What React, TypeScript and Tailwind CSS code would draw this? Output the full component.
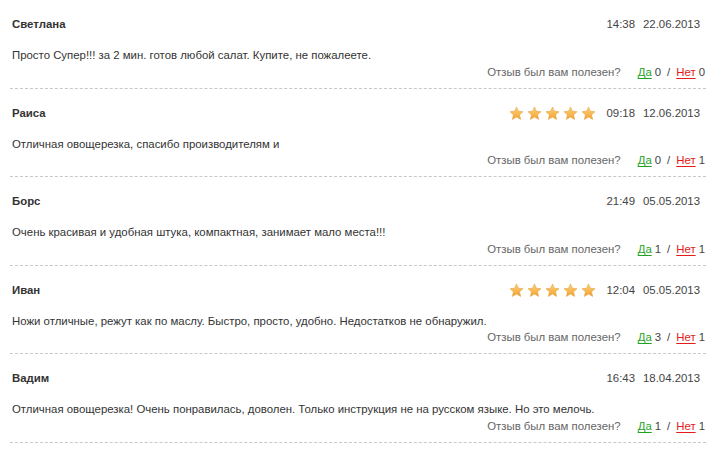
import React from 'react';

type Review = {
  name: string;
  text: string;
  time: string;
  date: string;
  stars?: number;
  yes: number;
  no: number;
};

const reviews: Review[] = [
  { name: 'Светлана', text: 'Просто Супер!!! за 2 мин. готов любой салат. Купите, не пожалеете.', time: '14:38', date: '22.06.2013', yes: 0, no: 0 },
  { name: 'Раиса', text: 'Отличная овощерезка, спасибо производителям и', time: '09:18', date: '12.06.2013', stars: 5, yes: 0, no: 1 },
  { name: 'Борс', text: 'Очень красивая и удобная штука, компактная, занимает мало места!!!', time: '21:49', date: '05.05.2013', yes: 1, no: 1 },
  { name: 'Иван', text: 'Ножи отличные, режут как по маслу. Быстро, просто, удобно. Недостатков не обнаружил.', time: '12:04', date: '05.05.2013', stars: 5, yes: 3, no: 1 },
  { name: 'Вадим', text: 'Отличная овощерезка! Очень понравилась, доволен. Только инструкция не на русском языке. Но это мелочь.', time: '16:43', date: '18.04.2013', yes: 1, no: 1 },
];

function Star() {
  return (
    <svg width="15" height="15" viewBox="0 0 24 24">
      <defs>
        <linearGradient id="sg" x1="0" y1="0" x2="0" y2="1">
          <stop offset="0" stopColor="#fdd27a" />
          <stop offset="1" stopColor="#f2a230" />
        </linearGradient>
      </defs>
      <path
        d="M12 1.5l3.1 6.9 7.4.7-5.6 5 1.7 7.4L12 17.6l-6.6 3.9 1.7-7.4-5.6-5 7.4-.7z"
        fill="url(#sg)"
        stroke="#e39a35"
        strokeWidth="0.8"
        strokeLinejoin="round"
      />
    </svg>
  );
}

function ReviewItem({ r }: { r: Review }) {
  return (
    <div className="border-b border-dashed border-[#c8c8c8] pt-[16px] pb-[6.5px]">
      <div className="flex h-[18px] items-center justify-between pl-[2px] pr-[6px]">
        <span className="font-bold text-[#333]">{r.name}</span>
        <div className="flex items-center text-[#444]">
          {r.stars ? (
            <div className="mr-[10px] flex gap-[3px]">
              {Array.from({ length: r.stars }).map((_, i) => (
                <Star key={i} />
              ))}
            </div>
          ) : null}
          <span>{r.time}</span>
          <span className="ml-[8px]">{r.date}</span>
        </div>
      </div>
      <div className="mt-[13px] h-[17px] pl-[2px] leading-[17px] text-[#333]">{r.text}</div>
      <div className="flex h-[17px] items-center justify-end pr-[1px] text-[#666]">
        <span>Отзыв был вам полезен?</span>
        <span className="ml-[17px] text-[#1fa31f] underline underline-offset-2">Да</span>
        <span className="ml-[3px] text-[#444]">{r.yes}</span>
        <span className="mx-[6px] text-[#444]">/</span>
        <span className="text-[#e31b1b] underline underline-offset-2">Нет</span>
        <span className="ml-[3px] text-[#444]">{r.no}</span>
      </div>
    </div>
  );
}

export default function App() {
  return (
    <div
      className="h-[450px] w-[720px] overflow-hidden bg-white pl-[10px] pr-[14px] text-[11.4px]"
      style={{ fontFamily: '"Liberation Sans", Arial, sans-serif' }}
    >
      {reviews.map((r) => (
        <ReviewItem key={r.name} r={r} />
      ))}
    </div>
  );
}
